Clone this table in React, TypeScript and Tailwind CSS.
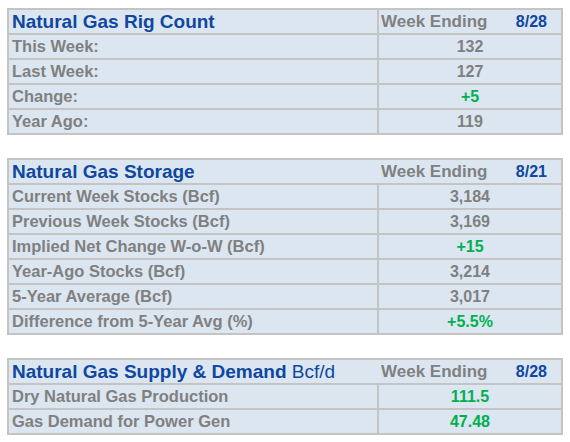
import clsx from 'clsx';

type Row = { label: string; value: string; up?: boolean };

type Panel = {
  title: string;
  unit?: string;
  week: string;
  headerDivider?: boolean;
  rows: Row[];
};

const panels: Panel[] = [
  {
    title: 'Natural Gas Rig Count',
    week: '8/28',
    headerDivider: true,
    rows: [
      { label: 'This Week:', value: '132' },
      { label: 'Last Week:', value: '127' },
      { label: 'Change:', value: '+5', up: true },
      { label: 'Year Ago:', value: '119' },
    ],
  },
  {
    title: 'Natural Gas Storage',
    week: '8/21',
    rows: [
      { label: 'Current Week Stocks (Bcf)', value: '3,184' },
      { label: 'Previous Week Stocks (Bcf)', value: '3,169' },
      { label: 'Implied Net Change W-o-W (Bcf)', value: '+15', up: true },
      { label: 'Year-Ago Stocks (Bcf)', value: '3,214' },
      { label: '5-Year Average (Bcf)', value: '3,017' },
      { label: 'Difference from 5-Year Avg (%)', value: '+5.5%', up: true },
    ],
  },
  {
    title: 'Natural Gas Supply & Demand',
    unit: 'Bcf/d',
    week: '8/28',
    rows: [
      { label: 'Dry Natural Gas Production', value: '111.5', up: true },
      { label: 'Gas Demand for Power Gen', value: '47.48', up: true },
    ],
  },
];

const StatTable = ({ panel }: { panel: Panel }) => (
  <div className="w-[556px] border-2 border-[#c4c4c4] bg-[#dce6f1]">
    {/* header */}
    <div className="flex h-[23px] items-center">
      <div className="w-[368px] pl-[3px] text-[19px] font-bold leading-none text-[#0f47a1]">
        {panel.title}
        {panel.unit && <span className="font-normal"> {panel.unit}</span>}
      </div>
      <div
        className={clsx(
          'flex h-full flex-1 items-center justify-between border-l-2 pl-[2px] pr-[14px]',
          panel.headerDivider ? 'border-[#c4c4c4]' : 'border-transparent',
        )}
      >
        <span className="text-[17px] font-bold text-[#808080]">Week Ending</span>
        <span className="text-[16px] font-bold text-[#0f47a1]">{panel.week}</span>
      </div>
    </div>

    {panel.rows.map((row) => (
      <div key={row.label} className="flex h-[25px] items-center border-t-2 border-[#c4c4c4]">
        <div className="w-[368px] pl-[3px] text-[16.5px] font-bold text-[#808080]">{row.label}</div>
        <div
          className={clsx(
            'flex h-full flex-1 items-center justify-center border-l-2 border-[#c4c4c4] text-[16px] font-bold',
            row.up ? 'text-[#00b050]' : 'text-[#808080]',
          )}
        >
          {row.value}
        </div>
      </div>
    ))}
  </div>
);

export default function App() {
  return (
    <div className="h-[442px] w-[570px] bg-white pl-[7px] pt-[8px] font-['Liberation_Sans',Arial,sans-serif]">
      <div className="flex flex-col gap-[23px]">
        {panels.map((p) => (
          <StatTable key={p.title} panel={p} />
        ))}
      </div>
    </div>
  );
}
